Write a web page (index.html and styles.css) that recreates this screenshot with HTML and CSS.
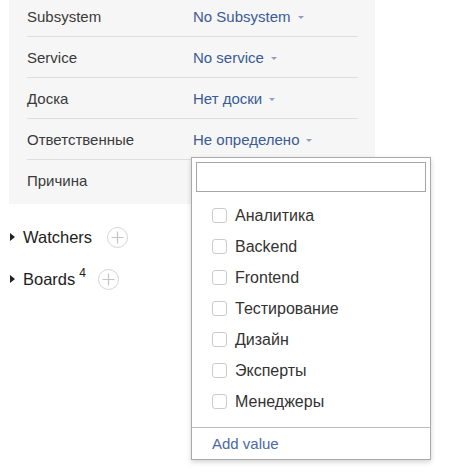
FILE: index.html
```html
<!DOCTYPE html>
<html>
<head>
<meta charset="utf-8">
<link rel="stylesheet" href="styles.css">
</head>
<body>
<div class="page">
  <div class="panel">
    <div class="row"><span class="label">Subsystem</span><span class="value">No Subsystem<i class="caret"></i></span></div>
    <div class="row"><span class="label">Service</span><span class="value">No service<i class="caret"></i></span></div>
    <div class="row"><span class="label">Доска</span><span class="value">Нет доски<i class="caret"></i></span></div>
    <div class="row"><span class="label">Ответственные</span><span class="value">Не определено<i class="caret"></i></span></div>
    <div class="row"><span class="label">Причина</span><span class="value"></span></div>
  </div>

  <div class="sections">
    <div class="section"><i class="tri"></i><span class="sec-title">Watchers</span><span class="plus plus-w"><svg width="21" height="21" viewBox="0 0 21 21"><path d="M10.5 4.5v12M4.5 10.5h12" stroke="#c4c4c4" stroke-width="1.2" fill="none"/></svg></span></div>
    <div class="section"><i class="tri"></i><span class="sec-title">Boards</span><sup class="count">4</sup><span class="plus plus-b"><svg width="21" height="21" viewBox="0 0 21 21"><path d="M10.5 4.5v12M4.5 10.5h12" stroke="#c4c4c4" stroke-width="1.2" fill="none"/></svg></span></div>
  </div>

  <div class="popup">
    <div class="search"><div class="input"></div></div>
    <ul class="options">
      <li><span class="box"></span>Аналитика</li>
      <li><span class="box"></span>Backend</li>
      <li><span class="box"></span>Frontend</li>
      <li><span class="box"></span>Тестирование</li>
      <li><span class="box"></span>Дизайн</li>
      <li><span class="box"></span>Эксперты</li>
      <li><span class="box"></span>Менеджеры</li>
    </ul>
    <div class="add">Add value</div>
  </div>
</div>
</body>
</html>
```

FILE: styles.css
```css
html, body {
  margin: 0;
  padding: 0;
  background: #ffffff;
}
body {
  width: 450px;
  height: 473px;
  overflow: hidden;
  font-family: "Liberation Sans", Arial, sans-serif;
  color: #333333;
}
.page {
  position: relative;
  display: flow-root;
  width: 450px;
  height: 473px;
}
.panel {
  margin-top: -4px;
  margin-left: 9px;
  width: 331px;
  padding: 0 17px 4px 18px;
  background: #f6f6f6;
}
.row {
  display: grid;
  grid-template-columns: 166px 1fr;
  align-items: center;
  height: 40px;
  border-bottom: 1px solid #dedede;
  font-size: 15px;
}
.row:last-child {
  border-bottom: none;
}
.label {
  color: #3a3a3a;
}
.value {
  color: #3b5b95;
  display: flex;
  align-items: center;
}
.caret {
  display: inline-block;
  width: 0;
  height: 0;
  border-left: 3px solid transparent;
  border-right: 3px solid transparent;
  border-top: 3px solid #8d9fbf;
  margin-left: 7px;
  margin-top: 3px;
}
.sections {
  margin-top: 12px;
  padding-left: 10px;
}
.section {
  display: flex;
  align-items: center;
  height: 42px;
}
.tri {
  display: inline-block;
  width: 0;
  height: 0;
  border-left: 5px solid #222222;
  border-top: 4px solid transparent;
  border-bottom: 4px solid transparent;
  margin-right: 8px;
}
.sec-title {
  font-size: 16.5px;
  color: #222222;
}
.count {
  font-size: 12px;
  color: #222222;
  margin-left: 4px;
  align-self: flex-start;
  margin-top: 9px;
  line-height: 1;
}
.plus {
  display: inline-flex;
  width: 21px;
  height: 21px;
  border: 1px solid #d4d4d4;
  border-radius: 50%;
  box-sizing: border-box;
  align-items: center;
  justify-content: center;
  background: #ffffff;
}
.plus-w {
  margin-left: 15px;
}
.plus-b {
  margin-left: 12px;
}
.plus svg {
  display: block;
  margin: -1px;
}
.popup {
  position: absolute;
  left: 191px;
  top: 157px;
  width: 238px;
  background: #ffffff;
  border: 1px solid #aaaaaa;
  box-shadow: 0 2px 5px rgba(0, 0, 0, 0.18);
}
.search {
  padding: 4px 4px 0 4px;
}
.input {
  height: 28px;
  border: 1px solid #a6a6a6;
  background: #ffffff;
}
.options {
  list-style: none;
  margin: 0;
  padding: 8px 0 10px 20px;
}
.options li {
  display: flex;
  align-items: center;
  height: 31px;
  font-size: 16px;
  color: #333333;
}
.box {
  width: 15px;
  height: 15px;
  box-sizing: border-box;
  border: 1px solid #cccccc;
  border-radius: 3px;
  margin-right: 8px;
  background: #ffffff;
}
.add {
  border-top: 1px solid #bdbdbd;
  height: 31px;
  line-height: 31px;
  padding-left: 20px;
  font-size: 15px;
  color: #4a6aa2;
}
```
